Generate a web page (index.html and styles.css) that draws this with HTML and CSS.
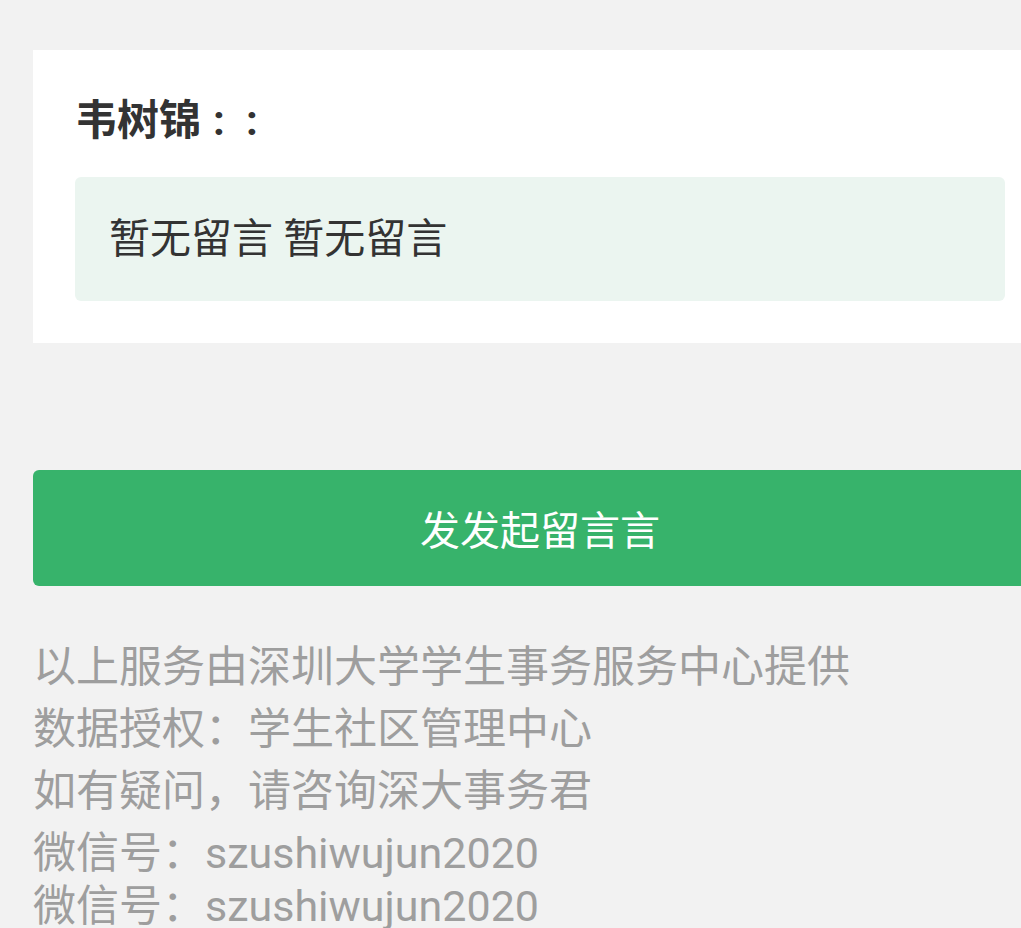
FILE: index.html
```html
<!DOCTYPE html>
<html lang="zh-CN">
<head>
<meta charset="utf-8">
<title>留言</title>
<link rel="stylesheet" href="styles.css">
</head>
<body>
<div class="page">
  <section class="card">
    <h2 class="name">韦树锦<span class="colons">:</span><span class="colons">:</span></h2>
    <div class="msg">暂无留言 暂无留言</div>
  </section>
  <button class="btn" type="button">发发起留言言</button>
  <footer class="foot">
    <p class="line">以上服务由深圳大学学生事务服务中心提供</p>
    <p class="line">数据授权：学生社区管理中心</p>
    <p class="line">如有疑问，请咨询深大事务君</p>
    <p class="line">微信号：szushiwujun2020</p>
    <p class="line last">微信号：szushiwujun2020</p>
  </footer>
</div>
</body>
</html>
```
FILE: styles.css
```css
html, body {
  margin: 0;
  padding: 0;
  overflow: hidden;
  background: #f2f2f2;
}
body {
  font-family: Roboto, "Noto Sans CJK SC", sans-serif;
  color: #333;
}
.page {
  width: 1014px;
  padding: 50px 0 0 33px;
}
.card {
  background: #fff;
  padding: 41px 42px 42px;
}
.name {
  margin: 0 0 26px;
  font-size: 42px;
  line-height: 60px;
  font-weight: 700;
  color: #333;
}
.colons {
  display: inline-block;
  margin-left: 12px;
  width: 10px;
}
.colons + .colons {
  margin-left: 23px;
}
.msg {
  background: #ebf5f0;
  border-radius: 6px;
  padding: 32px 34px;
  font-size: 41px;
  line-height: 60px;
  color: #333;
}
.btn {
  display: block;
  width: 100%;
  height: 116px;
  margin-top: 127px;
  border: none;
  border-radius: 6px;
  background: #37b36b;
  color: #fff;
  font-family: Roboto, "Noto Sans CJK SC", sans-serif;
  font-size: 40px;
  padding: 0;
}
.foot {
  margin-top: 50px;
  color: #9e9e9e;
  font-size: 43px;
}
.line {
  margin: 0;
  line-height: 62px;
  white-space: nowrap;
}
.line.last {
  line-height: 44px;
}
```
